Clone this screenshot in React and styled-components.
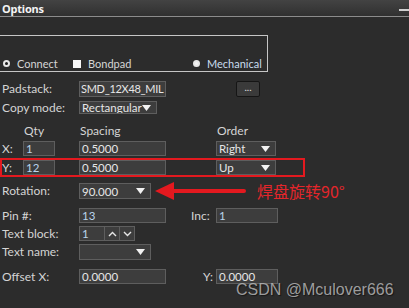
import styled, { createGlobalStyle } from "styled-components"

const GlobalStyle = createGlobalStyle`
  html, body {
    margin: 0;
    padding: 0;
    background: #2c2c2c;
  }
  body {
    font-family: Lato, "Noto Sans", sans-serif;
    font-size: 12px;
    color: #d6d6d6;
  }
`

const Caret = () => (
  <svg width="9" height="6" viewBox="0 0 9 6">
    <polygon points="0,0 9,0 4.5,6" fill="#f2f2f2" />
  </svg>
)

const Chevron = ({ up }) => (
  <svg width="9" height="6" viewBox="0 0 9 6">
    <polyline
      points={up ? "1,5 4.5,1.5 8,5" : "1,1 4.5,4.5 8,1"}
      fill="none"
      stroke="#e6e6e6"
      strokeWidth="1.4"
    />
  </svg>
)

const Arrow = () => (
  <svg width="92" height="18" viewBox="0 0 92 18">
    <polygon points="0,9 19,0 19,18" fill="#e3191f" />
    <line x1="17" y1="9" x2="89" y2="9" stroke="#e3191f" strokeWidth="4" strokeLinecap="round" />
  </svg>
)

const App = () => {
  return (
    <>
      <GlobalStyle />
      <Panel>
        <Header>
          <Title>Options</Title>
          <Collapse />
        </Header>

        <Group>
          <Choice $w={70}>
            <Radio />
            Connect
          </Choice>
          <Choice $w={120}>
            <Check />
            Bondpad
          </Choice>
          <Choice $tint>
            <Radio $on />
            Mechanical
          </Choice>
        </Group>

        <Row $top={8} $h={17}>
          <Label>Padstack:</Label>
          <Field $w={87} $h={16} $tight>SMD_12X48_MIL</Field>
          <DotsButton>...</DotsButton>
        </Row>

        <Row $top={2} $h={17}>
          <Label>Copy mode:</Label>
          <Select $w={78} $h={13}>
            Rectangular
            <Caret />
          </Select>
        </Row>

        <Row $top={8} $h={14}>
          <Label $w={22}></Label>
          <Label $w={56}>Qty</Label>
          <Label $w={137}>Spacing</Label>
          <Label>Order</Label>
        </Row>

        <Row $top={3} $h={15}>
          <Label $w={21}>X:</Label>
          <Field $w={32} $tint>1</Field>
          <Field $w={87} $ml={24}>0.5000</Field>
          <Select $w={60} $ml={50}>
            Right
            <Caret />
          </Select>
        </Row>

        <Row $top={2} $h={19} $marked>
          <Label $w={21}>Y:</Label>
          <Field $w={32} $tint>12</Field>
          <Field $w={87} $ml={24}>0.5000</Field>
          <Select $w={60} $ml={50}>
            Up
            <Caret />
          </Select>
        </Row>

        <Row $top={6} $h={16}>
          <Label>Rotation:</Label>
          <Select $w={72} $h={16}>
            90.000
            <Caret />
          </Select>
          <Pointer>
            <Arrow />
          </Pointer>
          <Note>焊盘旋转90°</Note>
        </Row>

        <Row $top={9} $h={15}>
          <Label>Pin #:</Label>
          <Field $w={87} $tint>13</Field>
          <Label $w={25} $ml={25}>Inc:</Label>
          <Field $w={62} $tint>1</Field>
        </Row>

        <Row $top={3} $h={15}>
          <Label>Text block:</Label>
          <Field $w={26} $tint>1</Field>
          <Spin>
            <Chevron up />
          </Spin>
          <Spin>
            <Chevron />
          </Spin>
        </Row>

        <Row $top={3} $h={16}>
          <Label>Text name:</Label>
          <Select $w={72} $h={16}>
            <span />
            <Caret />
          </Select>
        </Row>

        <Row $top={9} $h={15}>
          <Label>Offset X:</Label>
          <Field $w={87}>0.0000</Field>
          <Label $w={13} $ml={37}>Y:</Label>
          <Field $w={62}>0.0000</Field>
        </Row>

        <Watermark>CSDN @Mculover666</Watermark>
      </Panel>
    </>
  )
}

const Panel = styled.div`
  position: relative;
  width: 409px;
  height: 308px;
  overflow: hidden;
  background: #2c2c2c;
`

const Header = styled.div`
  display: flex;
  align-items: center;
  justify-content: space-between;
  height: 16px;
  padding: 0 0 0 2px;
  background: linear-gradient(#434343, #303030);
  border-bottom: 1px solid #8c8c8c;
`

const Title = styled.span`
  font-family: "Noto Sans", sans-serif;
  font-weight: 700;
  font-size: 11px;
  color: #f4f4f4;
  letter-spacing: -0.2px;
`

const Collapse = styled.span`
  width: 10px;
  height: 2px;
  margin-top: 3px;
  background: #cfcfcf;
`

const Group = styled.div`
  display: flex;
  align-items: center;
  width: 268px;
  margin-top: 18px;
  padding: 20px 0 0 3px;
  box-sizing: border-box;
  height: 37px;
  border: 1px solid #c6c6c6;
  border-left: none;
  font-size: 11px;
`

const Choice = styled.label`
  flex: none;
  display: flex;
  align-items: center;
  gap: 7px;
  width: ${(p) => (p.$w ? `${p.$w}px` : "auto")};
  color: ${(p) => (p.$tint ? "#c9dcee" : "#d6d6d6")};
  line-height: 14px;
`

const Radio = styled.span`
  width: 7px;
  height: 7px;
  box-sizing: border-box;
  border-radius: 50%;
  background: ${(p) => (p.$on ? "#f4f4f4" : "#1c1c1c")};
  border: 2px solid #e8e8e8;
`

const Check = styled.span`
  width: 8px;
  height: 8px;
  background: #f6f6f6;
`

const Row = styled.div`
  display: flex;
  align-items: center;
  height: ${(p) => p.$h}px;
  margin-top: ${(p) => p.$top}px;
  padding-left: 2px;
  box-sizing: border-box;
  width: ${(p) => (p.$marked ? "305px" : "auto")};
  outline: ${(p) => (p.$marked ? "2px solid #e3191f" : "none")};
  outline-offset: -2px;
`

const Label = styled.span`
  flex: none;
  width: ${(p) => (p.$w ? `${p.$w}px` : "77px")};
  margin-left: ${(p) => p.$ml || 0}px;
  white-space: nowrap;
  color: #d4d4d4;
  line-height: 14px;
`

const Field = styled.div`
  flex: none;
  display: flex;
  align-items: center;
  width: ${(p) => p.$w}px;
  height: ${(p) => p.$h || 15}px;
  margin-left: ${(p) => p.$ml || 0}px;
  padding: 0 ${(p) => (p.$tight ? 1 : 2)}px;
  box-sizing: border-box;
  background: #3d3d3d;
  border: 1px solid #5e5e5e;
  color: ${(p) => (p.$tint ? "#b9d3ec" : "#e6e6e6")};
  font-size: ${(p) => (p.$tight ? 11 : 11.5)}px;
  letter-spacing: ${(p) => (p.$tight ? "-0.3px" : "0")};
  line-height: 13px;
  white-space: nowrap;
  overflow: hidden;
`

const Select = styled(Field)`
  justify-content: space-between;
  padding-right: 5px;
  height: ${(p) => p.$h || 15}px;
`

const DotsButton = styled.button`
  flex: none;
  width: 24px;
  height: 16px;
  margin-left: 70px;
  padding: 0 0 4px;
  font: inherit;
  font-size: 10px;
  line-height: 10px;
  color: #e0e0e0;
  background: #3a3a3a;
  border: 1px solid #151515;
  border-radius: 2px;
`

const Spin = styled.div`
  flex: none;
  display: flex;
  align-items: center;
  justify-content: center;
  width: 15px;
  height: 15px;
  box-sizing: border-box;
  background: #3d3d3d;
  border: 1px solid #5e5e5e;
  border-left: none;
`

const Pointer = styled.span`
  display: flex;
  margin-left: 4px;
`

const Note = styled.span`
  margin-left: 10px;
  font-family: "Noto Sans CJK SC", "Noto Sans", sans-serif;
  font-size: 16px;
  line-height: 18px;
  color: #e3262b;
`

const Watermark = styled.div`
  position: absolute;
  left: 236px;
  top: 281px;
  font-family: "Liberation Sans", Arial, sans-serif;
  font-size: 16px;
  color: rgba(190, 190, 190, 0.8);
  text-shadow: 1px 1px 1px rgba(0, 0, 0, 0.5);
  white-space: nowrap;
`

export default App
